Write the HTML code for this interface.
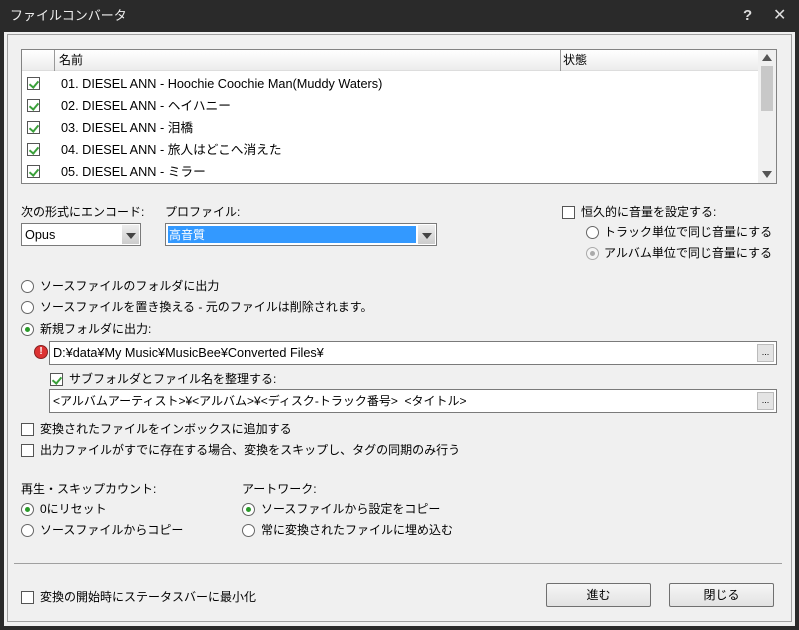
<!DOCTYPE html>
<html><head><meta charset="utf-8"><style>
*{box-sizing:border-box;margin:0;padding:0}
body{width:799px;height:630px;background:#2a2a2a;font-family:"Liberation Sans","Noto Sans CJK JP",sans-serif;font-size:12px;color:#000;position:relative;overflow:hidden}
.a{position:absolute}
.t{position:absolute;white-space:nowrap;line-height:14px}
.l{font-size:12.7px}
.cb{position:absolute;width:13px;height:13px;border:1px solid #555;background:#fff}
.rb{position:absolute;width:13px;height:13px;border:1px solid #666;border-radius:50%;background:#fff}
.rb.on::after{content:"";position:absolute;left:3px;top:3px;width:5px;height:5px;border-radius:50%;background:#2a9a2a}
.ck::after{content:"";position:absolute;left:3px;top:1px;width:4px;height:7px;border:solid #3aa03a;border-width:0 2px 2px 0;transform:rotate(40deg)}
.field{position:absolute;background:#fff;border:1px solid #7a7a7a}
.btn{position:absolute;border:1px solid #707070;border-radius:2px;background:linear-gradient(#f6f6f6,#e2e2e2);text-align:center;line-height:22px}
.dd{position:absolute;top:1px;right:1px;bottom:1px;width:17px;background:linear-gradient(#eee,#ccc)}
.dd::after{content:"";position:absolute;left:4px;top:8px;border:5px solid transparent;border-top:6px solid #444}
</style></head><body>
<div class="t" style="left:10px;top:9px;color:#eee;font-size:13px">ファイルコンバータ</div>
<div class="t" style="left:743px;top:9px;color:#ddd;font-size:15px;font-weight:bold">?</div>
<div class="t" style="left:773px;top:9px;color:#ddd;font-size:16px">✕</div>
<div class="a" style="left:4px;top:32px;width:791px;height:594px;background:#f0f0f0"></div>
<div class="a" style="left:7px;top:34px;width:785px;height:588px;border:1px solid #a0a0a0"></div>

<div class="a" style="left:21px;top:49px;width:756px;height:135px;border:1px solid #828282;background:#fff"></div>
<div class="a" style="left:22px;top:50px;width:736px;height:21px;background:linear-gradient(#fff,#ececec);border-bottom:1px solid #ddd"></div>
<div class="a" style="left:54px;top:50px;width:1px;height:21px;background:#999"></div>
<div class="a" style="left:560px;top:50px;width:1px;height:21px;background:#999"></div>
<div class="t" style="left:59px;top:53px">名前</div>
<div class="t" style="left:563px;top:53px">状態</div>
<div class="a" style="left:758px;top:50px;width:18px;height:133px;background:#f0f0f0"></div>
<div class="a" style="left:761px;top:66px;width:12px;height:45px;background:#c8c8c8"></div>
<div class="a" style="left:762px;top:54px;border:5px solid transparent;border-bottom:7px solid #555;border-top:0"></div>
<div class="a" style="left:762px;top:171px;border:5px solid transparent;border-top:7px solid #555;border-bottom:0"></div>

<div class="cb ck" style="left:27px;top:77px"></div><div class="t l" style="left:61px;top:77px">01. DIESEL ANN - Hoochie Coochie Man(Muddy Waters)</div>
<div class="cb ck" style="left:27px;top:99px"></div><div class="t l" style="left:61px;top:99px">02. DIESEL ANN - ヘイハニー</div>
<div class="cb ck" style="left:27px;top:121px"></div><div class="t l" style="left:61px;top:121px">03. DIESEL ANN - 泪橋</div>
<div class="cb ck" style="left:27px;top:143px"></div><div class="t l" style="left:61px;top:143px">04. DIESEL ANN - 旅人はどこへ消えた</div>
<div class="cb ck" style="left:27px;top:165px"></div><div class="t l" style="left:61px;top:165px">05. DIESEL ANN - ミラー</div>

<div class="t" style="left:21px;top:205px">次の形式にエンコード:</div>
<div class="t" style="left:165px;top:205px">プロファイル:</div>
<div class="field" style="left:21px;top:223px;width:120px;height:23px"><div class="t l" style="left:3px;top:4px">Opus</div><div class="dd"></div></div>
<div class="field" style="left:165px;top:223px;width:272px;height:23px"><div class="a" style="left:2px;top:2px;width:248px;height:17px;background:#3399ff"></div><div class="t" style="left:3px;top:4px;color:#fff">高音質</div><div class="dd"></div></div>

<div class="cb" style="left:562px;top:206px"></div><div class="t" style="left:581px;top:205px">恒久的に音量を設定する:</div>
<div class="rb" style="left:586px;top:226px"></div><div class="t" style="left:604px;top:225px">トラック単位で同じ音量にする</div>
<div class="rb" style="left:586px;top:247px;background:#f4f4f4;border-color:#aaa"></div><div class="a" style="left:590px;top:251px;width:5px;height:5px;border-radius:50%;background:#aaa"></div><div class="t" style="left:604px;top:246px">アルバム単位で同じ音量にする</div>

<div class="rb" style="left:21px;top:280px"></div><div class="t" style="left:40px;top:279px">ソースファイルのフォルダに出力</div>
<div class="rb" style="left:21px;top:301px"></div><div class="t" style="left:40px;top:300px">ソースファイルを置き換える - 元のファイルは削除されます。</div>
<div class="rb on" style="left:21px;top:323px"></div><div class="t" style="left:40px;top:322px">新規フォルダに出力:</div>

<div class="a" style="left:34px;top:345px;width:14px;height:14px;border-radius:50%;background:#d33;border:1px solid #822;color:#fff;font-size:10px;font-weight:bold;text-align:center;line-height:12px">!</div>
<div class="field" style="left:49px;top:341px;width:728px;height:24px"><div class="t l" style="left:3px;top:4px">D:¥data¥My Music¥MusicBee¥Converted Files¥</div><div class="a" style="right:2px;top:2px;width:17px;height:18px;background:#e4e4e4;border:1px solid #bbb;font-size:9px;text-align:center;line-height:14px">...</div></div>
<div class="cb ck" style="left:50px;top:373px"></div><div class="t" style="left:69px;top:372px">サブフォルダとファイル名を整理する:</div>
<div class="field" style="left:49px;top:389px;width:728px;height:24px"><div class="t" style="left:3px;top:4px">&lt;アルバムアーティスト&gt;¥&lt;アルバム&gt;¥&lt;ディスク-トラック番号&gt;&nbsp; &lt;タイトル&gt;</div><div class="a" style="right:2px;top:2px;width:17px;height:18px;background:#e4e4e4;border:1px solid #bbb;font-size:9px;text-align:center;line-height:14px">...</div></div>

<div class="cb" style="left:21px;top:423px"></div><div class="t" style="left:40px;top:422px">変換されたファイルをインボックスに追加する</div>
<div class="cb" style="left:21px;top:444px"></div><div class="t" style="left:40px;top:443px">出力ファイルがすでに存在する場合、変換をスキップし、タグの同期のみ行う</div>

<div class="t" style="left:21px;top:482px">再生・スキップカウント:</div>
<div class="rb on" style="left:21px;top:503px"></div><div class="t" style="left:40px;top:502px">0にリセット</div>
<div class="rb" style="left:21px;top:524px"></div><div class="t" style="left:40px;top:523px">ソースファイルからコピー</div>
<div class="t" style="left:242px;top:482px">アートワーク:</div>
<div class="rb on" style="left:242px;top:503px"></div><div class="t" style="left:261px;top:502px">ソースファイルから設定をコピー</div>
<div class="rb" style="left:242px;top:524px"></div><div class="t" style="left:261px;top:523px">常に変換されたファイルに埋め込む</div>

<div class="a" style="left:14px;top:563px;width:768px;height:1px;background:#a0a0a0"></div>
<div class="cb" style="left:21px;top:591px"></div><div class="t" style="left:40px;top:590px">変換の開始時にステータスバーに最小化</div>
<div class="btn" style="left:546px;top:583px;width:105px;height:24px">進む</div>
<div class="btn" style="left:669px;top:583px;width:105px;height:24px">閉じる</div>
</body></html>
